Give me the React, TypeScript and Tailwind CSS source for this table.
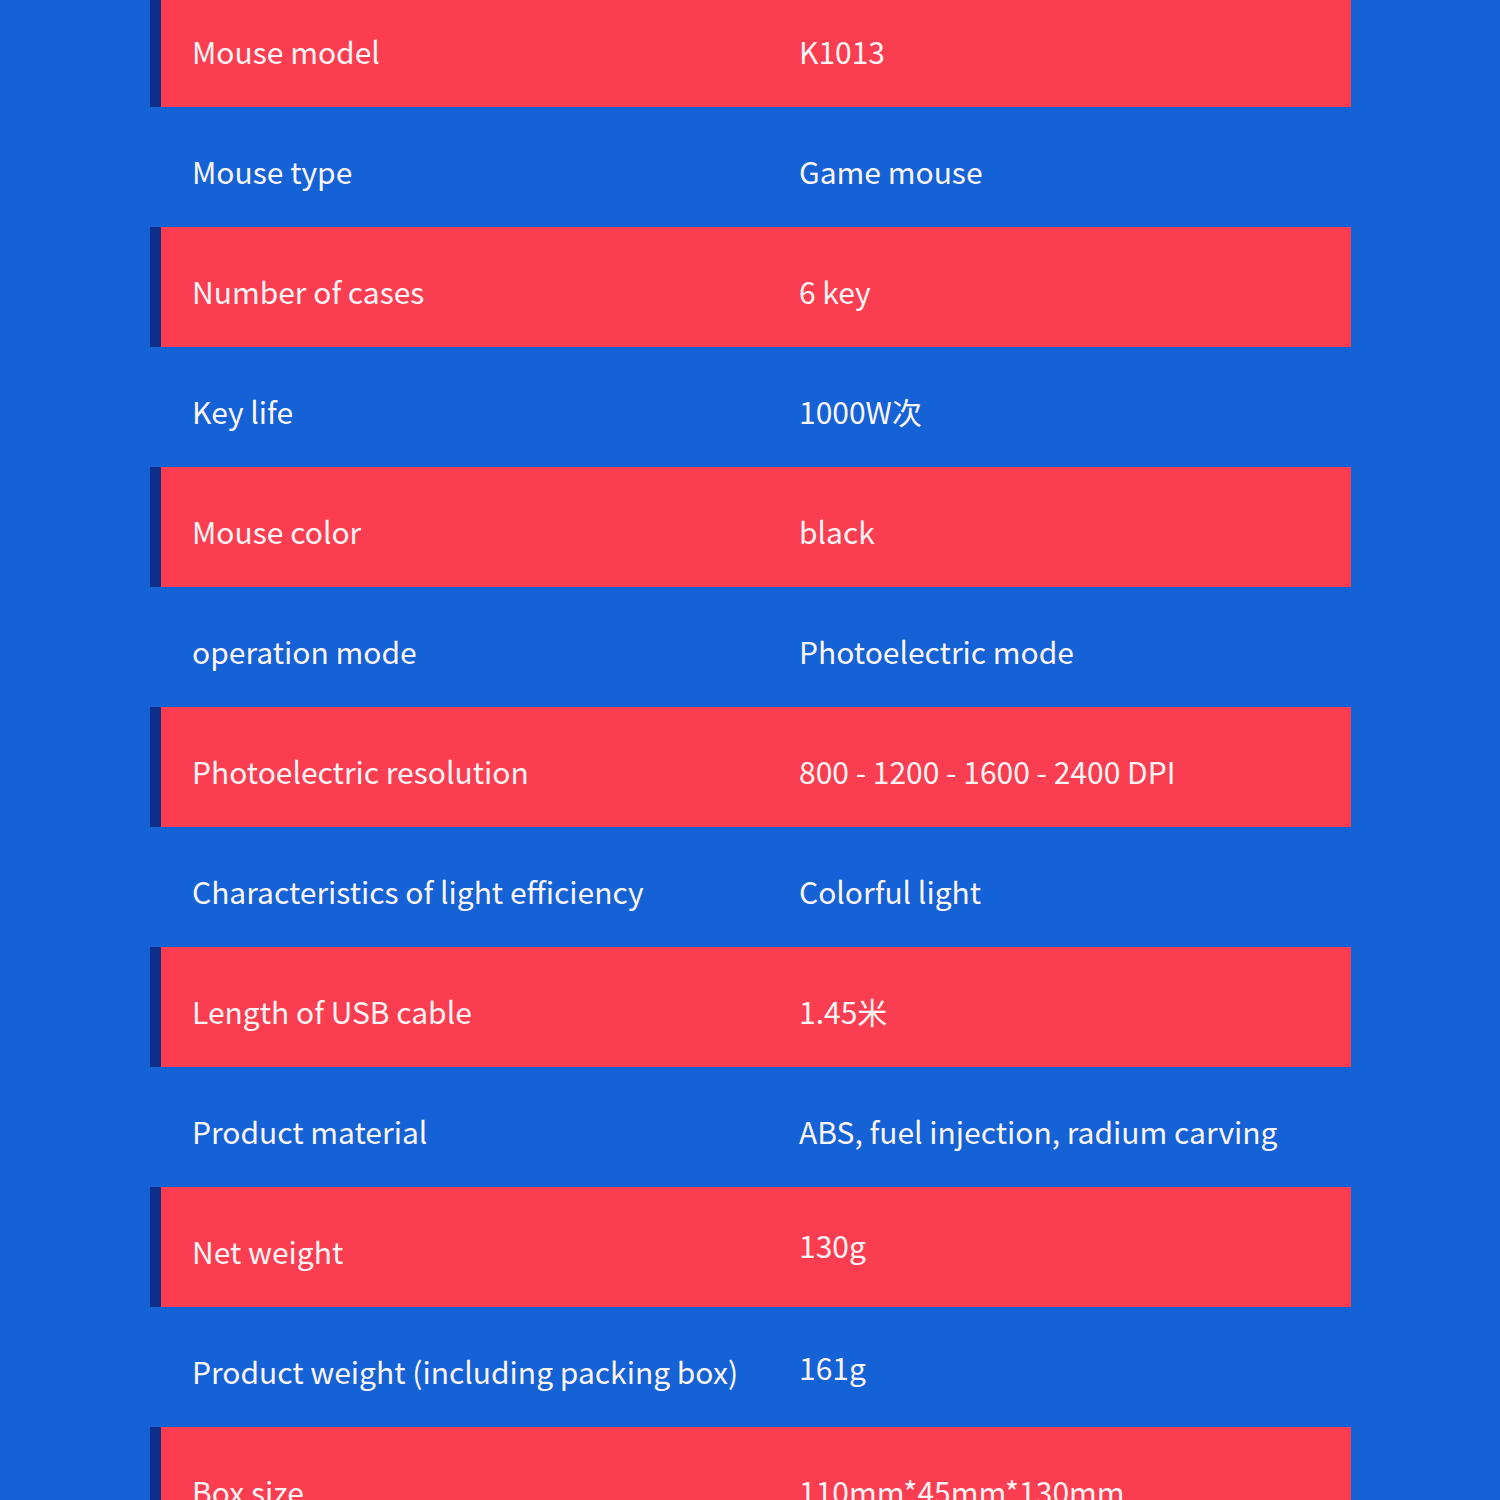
const specs: { label: string; value: string; vOffset?: string }[] = [
  { label: "Mouse model", value: "K1013" },
  { label: "Mouse type", value: "Game mouse" },
  { label: "Number of cases", value: "6 key" },
  { label: "Key life", value: "1000W次" },
  { label: "Mouse color", value: "black" },
  { label: "operation mode", value: "Photoelectric mode" },
  { label: "Photoelectric resolution", value: "800 - 1200 - 1600 - 2400 DPI" },
  { label: "Characteristics of light efficiency", value: "Colorful light" },
  { label: "Length of USB cable", value: "1.45米" },
  { label: "Product material", value: "ABS, fuel injection, radium carving" },
  { label: "Net weight", value: "130g", vOffset: "-mt-[12px]" },
  { label: "Product weight (including packing box)", value: "161g", vOffset: "-mt-[8px]" },
  { label: "Box size", value: "110mm*45mm*130mm" },
];

export default function App() {
  return (
    <div
      className="h-[1500px] w-[1500px] overflow-hidden bg-[#1562d6] text-[30px] text-[#fbf5f5]"
      style={{ fontFamily: '"Noto Sans CJK SC", "Noto Sans", sans-serif' }}
    >
      <div className="-mt-[13px] pl-[150px] pr-[149px]">
        {specs.map((row, i) => {
          const striped = i % 2 === 0;
          return (
            <div key={row.label} className="flex h-[120px]">
              <div className={`w-[11px] ${striped ? "bg-[#0d2f8a]" : ""}`} />
              <div
                className={`flex flex-1 items-center pl-[31px] pt-[8px] ${striped ? "bg-[#fa3d50]" : ""}`}
              >
                <span className="w-[607px] leading-none">{row.label}</span>
                <span className={`leading-none ${row.vOffset ?? ""}`}>{row.value}</span>
              </div>
            </div>
          );
        })}
      </div>
    </div>
  );
}
